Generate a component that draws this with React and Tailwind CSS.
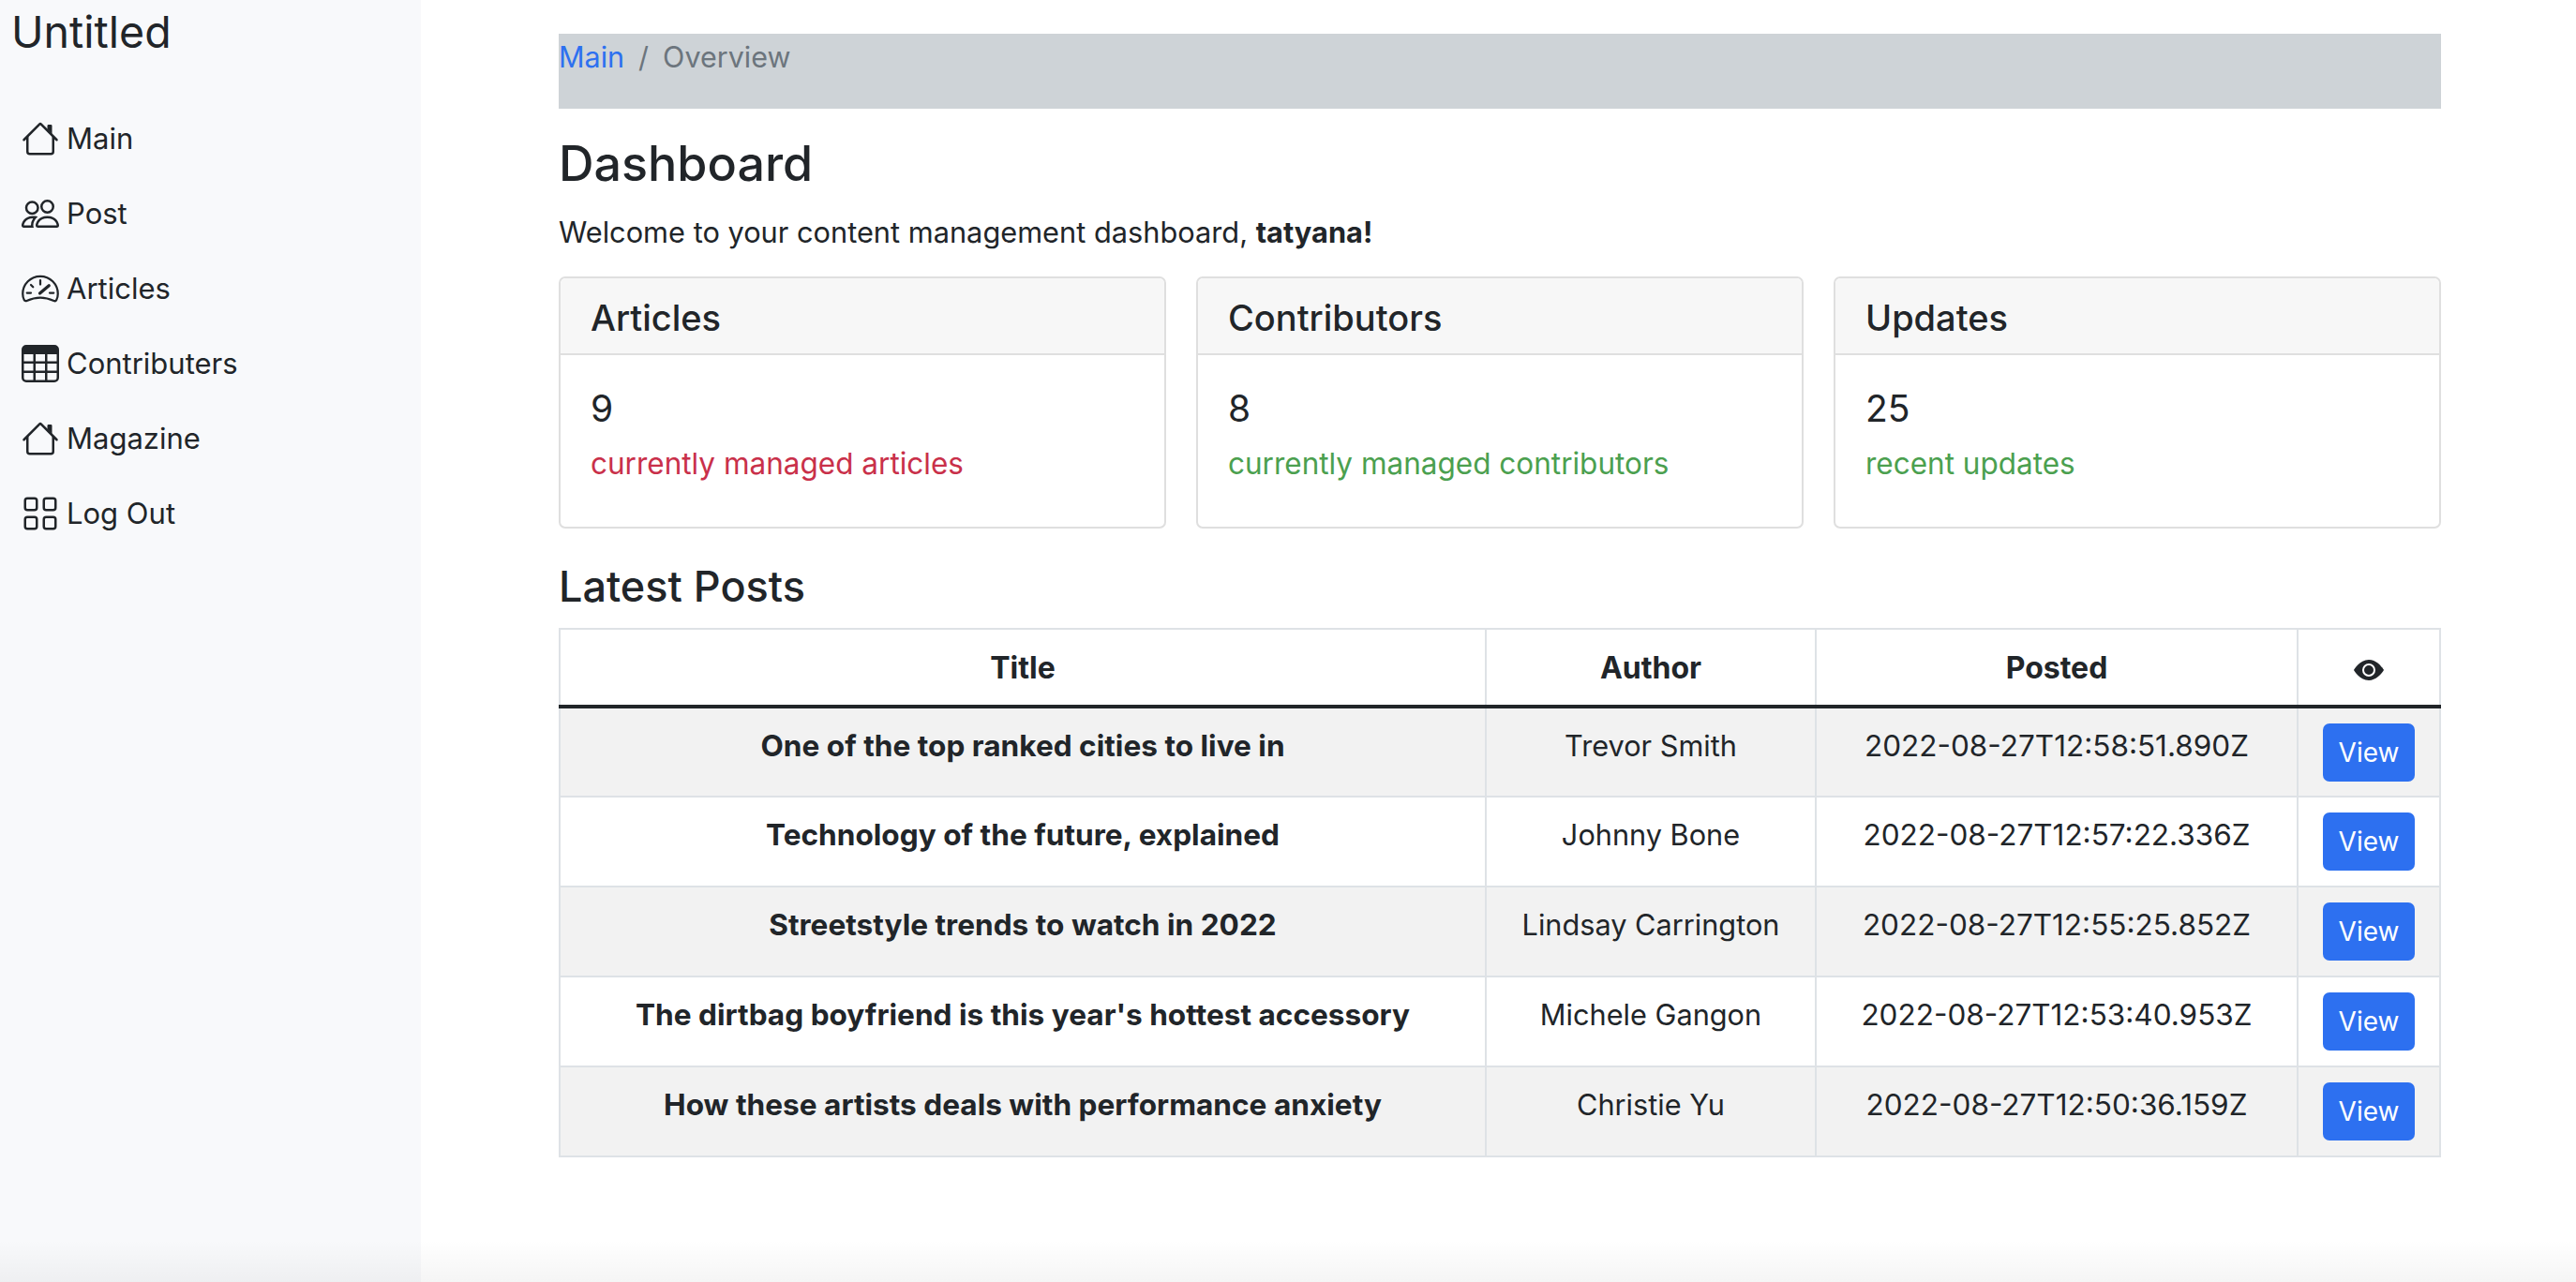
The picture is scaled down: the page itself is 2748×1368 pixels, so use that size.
import React from 'react';

const HouseIcon = () => (
  <svg viewBox="0 0 16 16" fill="currentColor" className="w-[40px] h-[40px] shrink-0">
    <path fillRule="evenodd" d="M2 13.5V7h1v6.5a.5.5 0 0 0 .5.5h9a.5.5 0 0 0 .5-.5V7h1v6.5a1.5 1.5 0 0 1-1.5 1.5h-9A1.5 1.5 0 0 1 2 13.5zm11-11V6l-2-2V2.5a.5.5 0 0 1 .5-.5h1a.5.5 0 0 1 .5.5z" />
    <path fillRule="evenodd" d="M7.293 1.5a1 1 0 0 1 1.414 0l6.647 6.646a.5.5 0 0 1-.708.708L8 2.207 1.354 8.854a.5.5 0 1 1-.708-.708L7.293 1.5z" />
  </svg>
);

const PeopleIcon = () => (
  <svg viewBox="0 0 16 16" fill="currentColor" className="w-[40px] h-[40px] shrink-0">
    <path d="M15 14s1 0 1-1-1-4-5-4-5 3-5 4 1 1 1 1h8zm-7.978-1A.261.261 0 0 1 7 12.996c.001-.264.167-1.03.76-1.72C8.312 10.629 9.282 10 11 10c1.717 0 2.687.63 3.24 1.276.593.69.758 1.457.76 1.72l-.008.002a.274.274 0 0 1-.014.002H7.022zM11 7a2 2 0 1 0 0-4 2 2 0 0 0 0 4zm3-2a3 3 0 1 1-6 0 3 3 0 0 1 6 0zM6.936 9.28a5.88 5.88 0 0 0-1.23-.247A7.35 7.35 0 0 0 5 9c-4 0-5 3-5 4 0 .667.333 1 1 1h4.216A2.238 2.238 0 0 1 5 13c0-1.01.377-2.042 1.09-2.904.243-.294.526-.569.846-.816zM4.92 10A5.493 5.493 0 0 0 4 13H1c0-.26.164-1.03.76-1.724.545-.636 1.492-1.256 3.16-1.275zM1.5 5.5a3 3 0 1 1 6 0 3 3 0 0 1-6 0zm3-2a2 2 0 1 0 0 4 2 2 0 0 0 0-4z" />
  </svg>
);

// gauge outline with a curved base, ticks and needle
const SpeedometerIcon = () => (
  <svg viewBox="0 0 16 16" fill="none" stroke="currentColor" strokeLinecap="round" className="w-[40px] h-[40px] shrink-0">
    <path strokeWidth="0.9" d="M8 2.7A7.5 7.5 0 0 0 .5 10.2c0 1 .2 1.9.6 2.6.2.4.7.6 1.1.4C3.9 12.4 5.9 11.8 8 11.8s4.1.6 5.8 1.4c.4.2.9 0 1.1-.4.4-.7.6-1.6.6-2.6A7.5 7.5 0 0 0 8 2.7z" />
    <path strokeWidth="0.9" d="M8 4.4v1.8M4 6.4l.9.9M2.3 9.8h1.7M12 9.8h1.7" />
    <path strokeWidth="1.3" d="M7.8 10l3.9-3.3" />
  </svg>
);

const TableIcon = () => (
  <svg viewBox="0 0 16 16" fill="currentColor" className="w-[40px] h-[40px] shrink-0">
    <path d="M0 2a2 2 0 0 1 2-2h12a2 2 0 0 1 2 2v12a2 2 0 0 1-2 2H2a2 2 0 0 1-2-2V2zm15 2h-4v3h4V4zm0 4h-4v3h4V8zm0 4h-4v3h3a1 1 0 0 0 1-1v-2zm-5 3v-3H6v3h4zm-5 0v-3H1v2a1 1 0 0 0 1 1h3zm-4-4h4V8H1v3zm0-4h4V4H1v3zm5-3v3h4V4H6zm4 4H6v3h4V8z" />
  </svg>
);

const GridIcon = () => (
  <svg viewBox="0 0 16 16" fill="currentColor" className="w-[40px] h-[40px] shrink-0">
    <path d="M1 2.5A1.5 1.5 0 0 1 2.5 1h3A1.5 1.5 0 0 1 7 2.5v3A1.5 1.5 0 0 1 5.5 7h-3A1.5 1.5 0 0 1 1 5.5v-3zM2.5 2a.5.5 0 0 0-.5.5v3a.5.5 0 0 0 .5.5h3a.5.5 0 0 0 .5-.5v-3a.5.5 0 0 0-.5-.5h-3zm6.5.5A1.5 1.5 0 0 1 10.5 1h3A1.5 1.5 0 0 1 15 2.5v3A1.5 1.5 0 0 1 13.5 7h-3A1.5 1.5 0 0 1 9 5.5v-3zm1.5-.5a.5.5 0 0 0-.5.5v3a.5.5 0 0 0 .5.5h3a.5.5 0 0 0 .5-.5v-3a.5.5 0 0 0-.5-.5h-3zM1 10.5A1.5 1.5 0 0 1 2.5 9h3A1.5 1.5 0 0 1 7 10.5v3A1.5 1.5 0 0 1 5.5 15h-3A1.5 1.5 0 0 1 1 13.5v-3zm1.5-.5a.5.5 0 0 0-.5.5v3a.5.5 0 0 0 .5.5h3a.5.5 0 0 0 .5-.5v-3a.5.5 0 0 0-.5-.5h-3zm6.5.5A1.5 1.5 0 0 1 10.5 9h3a1.5 1.5 0 0 1 1.5 1.5v3a1.5 1.5 0 0 1-1.5 1.5h-3A1.5 1.5 0 0 1 9 13.5v-3zm1.5-.5a.5.5 0 0 0-.5.5v3a.5.5 0 0 0 .5.5h3a.5.5 0 0 0 .5-.5v-3a.5.5 0 0 0-.5-.5h-3z" />
  </svg>
);

const EyeIcon = () => (
  <svg viewBox="0 0 16 16" fill="currentColor" className="w-[32px] h-[32px]">
    <path d="M10.5 8a2.5 2.5 0 1 1-5 0 2.5 2.5 0 0 1 5 0z" />
    <path d="M0 8s3-5.5 8-5.5S16 8 16 8s-3 5.5-8 5.5S0 8 0 8zm8 3.5a3.5 3.5 0 1 0 0-7 3.5 3.5 0 0 0 0 7z" />
  </svg>
);

const navItems = [
  { label: 'Main', icon: <HouseIcon /> },
  { label: 'Post', icon: <PeopleIcon /> },
  { label: 'Articles', icon: <SpeedometerIcon /> },
  { label: 'Contributers', icon: <TableIcon /> },
  { label: 'Magazine', icon: <HouseIcon /> },
  { label: 'Log Out', icon: <GridIcon /> },
];

const cards = [
  { title: 'Articles', count: '9', note: 'currently managed articles', color: 'text-[#c9304a]' },
  { title: 'Contributors', count: '8', note: 'currently managed contributors', color: 'text-[#4ba04f]' },
  { title: 'Updates', count: '25', note: 'recent updates', color: 'text-[#4ba04f]' },
];

const posts = [
  { title: 'One of the top ranked cities to live in', author: 'Trevor Smith', posted: '2022-08-27T12:58:51.890Z' },
  { title: 'Technology of the future, explained', author: 'Johnny Bone', posted: '2022-08-27T12:57:22.336Z' },
  { title: 'Streetstyle trends to watch in 2022', author: 'Lindsay Carrington', posted: '2022-08-27T12:55:25.852Z' },
  { title: "The dirtbag boyfriend is this year's hottest accessory", author: 'Michele Gangon', posted: '2022-08-27T12:53:40.953Z' },
  { title: 'How these artists deals with performance anxiety', author: 'Christie Yu', posted: '2022-08-27T12:50:36.159Z' },
];

const App = () => {
  return (
    <div className="relative flex h-[1368px] overflow-hidden bg-white text-[#212529] font-['Inter',sans-serif] text-[31px] leading-[48px]">
      <aside className="w-[449px] shrink-0 bg-[#f8f9fb] px-[12px]">
        <div className="text-[46.5px] leading-[60px] mt-[4px] mb-[44px]">Untitled</div>
        <ul>
          {navItems.map((item) => (
            <li key={item.label} className="flex items-center gap-[8px] h-[80px] pl-[11px]">
              {item.icon}
              <span>{item.label}</span>
            </li>
          ))}
        </ul>
      </aside>

      <main className="flex-1 pl-[147px] pr-[144px] pt-[36px]">
        <div className="h-[80px] bg-[#ced3d7] text-[30.5px] leading-[50px]">
          <a className="text-[#2d70f0]">Main</a>
          <span className="text-[#6c757d] mx-[15px]">/</span>
          <span className="text-[#6c757d]">Overview</span>
        </div>

        <h1 className="text-[52px] leading-[68px] mt-[25px] font-medium">Dashboard</h1>
        <p className="mt-[15px] text-[30.75px]">Welcome to your content management dashboard, <b>tatyana!</b></p>

        <div className="grid grid-cols-3 gap-[32px] mt-[23px]">
          {cards.map((card) => (
            <div key={card.title} className="border-2 border-[#dfdfdf] rounded-[7px] h-[269px]">
              <div className="h-[82px] bg-[#f7f7f7] border-b-2 border-[#dfdfdf] px-[32px] pt-[3px] flex items-center text-[38px] font-medium rounded-t-[6px]">{card.title}</div>
              <div className="px-[32px] pt-[27px]">
                <div className="text-[39px] leading-[60px]">{card.count}</div>
                <div className={`text-[31.5px] mt-[5px] ${card.color}`}>{card.note}</div>
              </div>
            </div>
          ))}
        </div>

        <h2 className="text-[45px] leading-[56px] font-medium mt-[34px] mb-[16px]">Latest Posts</h2>

        <table className="w-full border-collapse text-center table-fixed">
          <colgroup>
            <col className="w-[988px]" />
            <col className="w-[352px]" />
            <col className="w-[514px]" />
            <col className="w-[152px]" />
          </colgroup>
          <thead>
            <tr className="h-[83px]">
              <th className="border-2 border-[#dee2e6] border-b-4 border-b-[#212529] font-bold text-[32px] pt-[1px]">Title</th>
              <th className="border-2 border-[#dee2e6] border-b-4 border-b-[#212529] font-bold text-[32px] pt-[1px]">Author</th>
              <th className="border-2 border-[#dee2e6] border-b-4 border-b-[#212529] font-bold text-[32px] pt-[1px]">Posted</th>
              <th className="border-2 border-[#dee2e6] border-b-4 border-b-[#212529]">
                <span className="flex justify-center pt-[6px]"><EyeIcon /></span>
              </th>
            </tr>
          </thead>
          <tbody>
            {posts.map((post, i) => (
              <tr key={post.title} className={i % 2 === 0 ? 'bg-[#f2f2f2]' : 'bg-white'}>
                <td className="border-2 border-[#dee2e6] font-bold text-[31.6px] align-top pt-[16px] h-[96px]">{post.title}</td>
                <td className="border-2 border-[#dee2e6] text-[30.7px] align-top pt-[16px]">{post.author}</td>
                <td className="border-2 border-[#dee2e6] text-[31.5px] align-top pt-[16px]">{post.posted}</td>
                <td className="border-2 border-[#dee2e6] align-middle">
                  <button className="w-[98px] h-[62px] rounded-[7px] bg-[#2d70f0] text-white text-[28px] leading-[40px]">View</button>
                </td>
              </tr>
            ))}
          </tbody>
        </table>
      </main>

      <div className="absolute inset-x-0 bottom-0 h-[45px] bg-gradient-to-b from-transparent to-black/[0.04]"></div>
    </div>
  );
};

export default App;
